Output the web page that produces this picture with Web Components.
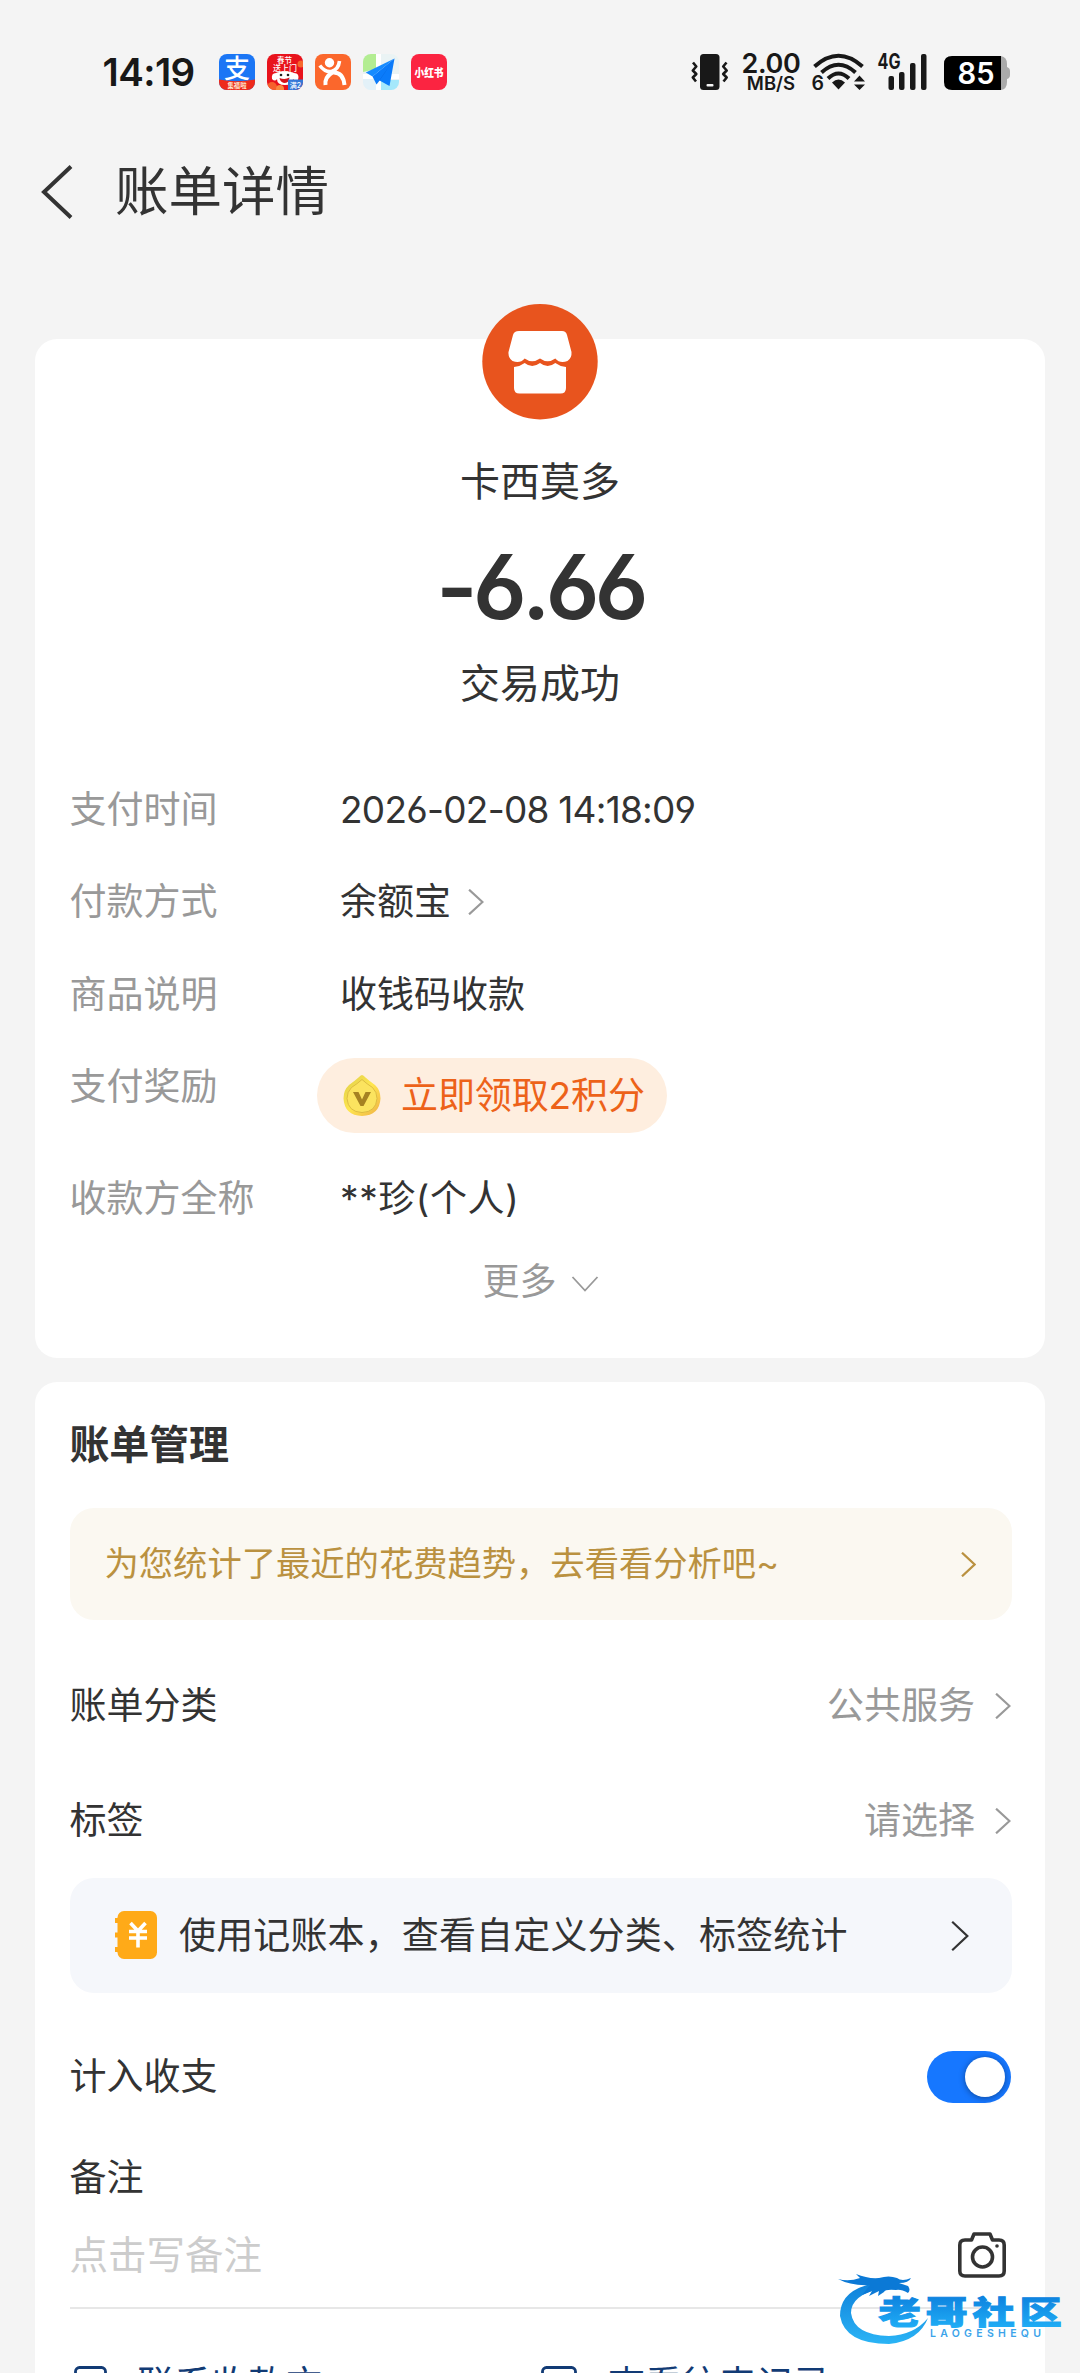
<!DOCTYPE html>
<html lang="zh-CN">
<head>
<meta charset="utf-8">
<title>账单详情</title>
<style>
html,body{margin:0;padding:0;background:#f4f4f4}
body{width:1080px;height:2373px;overflow:hidden;font-family:Inter,"Noto Sans CJK SC",sans-serif;font-size:37px;color:#333;-webkit-font-smoothing:antialiased}
</style>
</head>
<body>
<bill-page></bill-page>
<script>
const define = (name, html) => {
  const t = document.createElement('template');
  t.innerHTML = html;
  customElements.define(name, class extends HTMLElement {
    constructor() {
      super();
      this.attachShadow({ mode: 'open' }).append(t.content.cloneNode(true));
    }
  });
};

define('app-icons', `
<style>:host{display:flex;gap:12px}svg{width:36px;height:36px;display:block}</style>
<svg viewBox="0 0 36 36"><defs><clipPath id="a"><rect width="36" height="36" rx="8"/></clipPath></defs><g clip-path="url(#a)"><rect width="36" height="36" fill="#1b76f5"/><text x="18" y="24" font-size="26" font-weight="500" fill="#fff" text-anchor="middle">支</text><path d="M0 25.5Q18 29 36 25.5V36H0Z" fill="#ee2a1c"/><text x="18" y="34" font-size="6.3" font-weight="700" fill="#ffe9cf" text-anchor="middle">集福啦</text></g></svg>
<svg viewBox="0 0 36 36"><defs><clipPath id="b"><rect width="36" height="36" rx="8"/></clipPath></defs><g clip-path="url(#b)"><rect width="36" height="36" fill="#e8131c"/><circle cx="34" cy="10" r="3.5" fill="#f6672c"/><circle cx="5" cy="33" r="5" fill="#f6602c"/><circle cx="13" cy="35" r="4" fill="#f88a40"/><text x="17.500" y="8.800" font-size="7.500" font-weight="500" fill="#fff" text-anchor="middle">春节</text><text x="18" y="17" font-size="8" font-weight="500" fill="#fff" text-anchor="middle">送上门</text><path d="M5 25Q4 19 9 19Q12 17.500 18 17.500Q24 17.500 27 19Q33 19 31 26Q28 28 26 25Q26 31 18 31Q10 31 10 25Q8 28 5 25Z" fill="#fff"/><circle cx="14" cy="21" r="1.300" fill="#222"/><circle cx="21" cy="21" r="1.300" fill="#222"/><path d="M12.500 24Q18 26 22.500 23.500Q22 29 17 29Q13 28 12.500 24Z" fill="#d5121c"/><rect x="21" y="25.500" width="15" height="10.500" fill="#3478d8"/><text x="28.500" y="33.500" font-size="7" font-weight="500" fill="#fff" text-anchor="middle">满2</text></g></svg>
<svg viewBox="0 0 36 36"><rect width="36" height="36" rx="8" fill="#fb672c"/><circle cx="14.500" cy="8.700" r="4.700" fill="#fff"/><path d="M4.800 11.500Q10 18.500 16.500 17.500Q23.500 15.500 24.500 7" fill="none" stroke="#fff" stroke-width="3.600"/><path d="M10.500 31Q9.500 23 17.500 18.500Q28 17.500 29.500 31" fill="none" stroke="#fff" stroke-width="4"/></svg>
<svg viewBox="0 0 36 36"><defs><clipPath id="c"><rect width="36" height="36" rx="8"/></clipPath></defs><g clip-path="url(#c)"><rect width="36" height="36" fill="#eaf3f4"/><path d="M0 0H13V15L0 18Z" fill="#b3ed92"/><path d="M13 0H18V36H13ZM0 20H36V25H0Z" fill="#fff"/><path d="M18 26H36V36H18Z" fill="#a5e8fb"/><path d="M0 25H13V36H0Z" fill="#e3f1f8"/></g><path d="M31.500 4.500L2.800 18.500L9.500 22.500Z" fill="#168bff"/><path d="M31.500 4.500L9.500 22.500L13.500 30.500L16.500 26.500L26.500 32Z" fill="#0a7bfa"/><path d="M31.500 4.500L13.500 30.500L16.500 26.500Z" fill="#0558c6"/></svg>
<svg viewBox="0 0 36 36"><rect width="36" height="36" rx="8" fill="#fb2441"/><text x="18" y="22.500" font-size="11.500" font-weight="900" fill="#fff" text-anchor="middle" textLength="29" lengthAdjust="spacingAndGlyphs">小红书</text></svg>`);

define('system-tray', `
<style>
:host{display:flex;align-items:flex-start;height:38px;color:#181818}
svg{display:block;overflow:visible;flex:none}
.net{width:58px;margin:0 12px 0 14px;text-align:center;display:flex;flex-direction:column;align-items:center}
.a{font-size:27px;line-height:20px;font-weight:600;letter-spacing:-.3px}
.b{font-size:18.500px;line-height:15px;margin-top:2px;font-weight:600}
</style>
<svg width="37" height="36" viewBox="0 0 37 36"><rect x="9" y="0" width="19.500" height="36" rx="3.500" fill="#181818"/><rect x="15.500" y="30" width="7" height="2.500" rx="1" fill="#f4f4f4"/><g fill="none" stroke="#181818" stroke-width="2.600" stroke-linejoin="round"><path d="M2 8.500L5.300 12.500L1.800 16.500L5.300 20L1.800 23.500L5 27.500"/><path d="M35.500 8.500L32.200 12.500L35.700 16.500L32.200 20L35.700 23.500L32.500 27.500"/></g></svg>
<div class="net"><span class="a">2.00</span><span class="b">MB/S</span></div>
<svg width="54" height="38" viewBox="0 0 54 38"><g fill="none" stroke="#181818" stroke-width="4"><path d="M2.500 12.500Q26.500-9 50.500 12.500"/><path d="M9.500 18.500Q26.500 3 43.500 18.500"/><path d="M16 24.500Q26.500 14.500 37 24.500"/></g><path d="M20 28.500Q26.500 22.500 33 28.500L26.500 35.500Z" fill="#181818"/><text x="-.500" y="36" font-size="19.500" font-weight="600" fill="#181818">6</text><path d="M47.500 21.500L53 27.500H42ZM47.500 36L42 30.500H53Z" fill="#181818"/></svg>
<svg style="margin-left:12px" width="50" height="36" viewBox="0 0 50 36"><text x="-.500" y="15" font-size="21" font-weight="700" fill="#181818" textLength="23" lengthAdjust="spacingAndGlyphs">4G</text><g fill="#181818"><rect x="10.500" y="22" width="5.500" height="14" rx="2"/><rect x="21" y="18" width="5.500" height="18" rx="2"/><rect x="32" y="9" width="5.500" height="27" rx="2"/><rect x="43" y="0" width="5.500" height="36" rx="2"/></g></svg>
<svg style="margin:2px 0 0 16px" width="67" height="34" viewBox="0 0 67 34"><path d="M57 0Q63 1 63 8V11Q66 12 66 15V19Q66 22 63 23V26Q63 33 57 34Z" fill="#aaa"/><path d="M8 0H57V34H8Q0 34 0 26V8Q0 0 8 0Z" fill="#000"/><text x="32" y="28" font-size="30" font-weight="600" fill="#fff" text-anchor="middle" textLength="37" lengthAdjust="spacingAndGlyphs">85</text></svg>`);

define('status-bar', `
<style>
:host{display:flex;align-items:flex-start;box-sizing:border-box;height:144px;padding:54px 69px 0 102.500px;color:#181818}
.t{font-size:38.500px;line-height:36px;font-weight:600;width:116.500px;letter-spacing:-.6px}
system-tray{margin-left:auto}
</style><span class="t">14:19</span><app-icons></app-icons><system-tray></system-tray>`);

define('nav-bar', `
<style>
:host{display:flex;align-items:center;height:96px;padding-left:41px}
svg{display:block;width:32px;height:54px;margin-right:42px}
span{font-size:53.500px;line-height:96px}
</style><svg viewBox="0 0 32 54"><path d="M30 1.500L3 27L30 52.500" fill="none" stroke="#333" stroke-width="4"/></svg><span><slot></slot></span>`);

/* chevron: size and colour come from the host's width, height and colour */
define('chevron-right', `
<style>:host{display:block;width:16px;height:26px;flex:none;color:#999}svg{display:block;width:100%;height:100%}</style>
<svg viewBox="0 0 15 26" preserveAspectRatio="none"><path d="M1 .700L13.600 13L1 25.300" fill="none" stroke="currentColor" stroke-width="2.200" vector-effect="non-scaling-stroke"/></svg>`);

define('ui-card', `
<style>:host{display:block;box-sizing:border-box;width:1010px;margin-left:35px;background:#fff;border-radius:22px}</style><slot></slot>`);

define('payee-summary', `
<style>
:host{display:flex;flex-direction:column;align-items:center}
.badge{display:block;width:116px;height:116px;margin-top:-35px}
.n{font-size:40px;line-height:54px;margin-top:34.500px;height:54px}
.amt{font-size:89px;line-height:88px;height:88px;margin-top:34px;font-weight:600;font-feature-settings:"cv03","cv04","cv05","ss01";letter-spacing:-4.700px}
.s{font-size:40px;line-height:54px;margin-top:26.500px;height:54px}
</style>
<svg class="badge" viewBox="0 0 116 116"><circle cx="58" cy="57.700" r="57.700" fill="#e8541e"/><path d="M37 27H80Q84 27 85 31L89.500 48Q90 54 85.500 57Q78 60 73.300 54.500Q65.700 60 58 54.500Q50 60 42.700 54.500Q38 60 30.500 57Q26 54 26.500 48L31 31Q32 27 37 27Z" fill="#fff"/><path d="M32 63Q38 62.500 42.700 59Q50 65 58 59Q65.700 65 73.300 59Q78 62.500 84 63V84Q84 89.500 78.500 89.500H37.500Q32 89.500 32 84Z" fill="#fff"/></svg>
<span class="n"><slot name="name"></slot></span><span class="amt"><slot name="amount"></slot></span><span class="s"><slot name="state"></slot></span>`);

define('detail-row', `
<style>
:host{display:flex;align-items:center;height:92.500px;padding:0 34.500px;line-height:54px}
.l{width:270.500px;color:#999;flex:none}
.v{display:flex;align-items:center;color:#333}
</style><span class="l"><slot name="label"></slot></span><span class="v"><slot></slot></span>`);

define('reward-pill', `
<style>
:host{display:flex;align-items:center;box-sizing:border-box;width:350px;height:75px;margin:0 0 -20px -23px;border-radius:38px;background:#feeedf;color:#ed6219;padding-left:26px;line-height:72px;letter-spacing:-.1px}
svg{width:38px;height:42px;margin-right:20px;display:block}
</style>
<svg viewBox="0 0 38 42"><defs><linearGradient id="g" x2="1" y2="1"><stop stop-color="#dccd48"/><stop offset=".5" stop-color="#ffe650"/><stop offset="1" stop-color="#efb045"/></linearGradient></defs><path d="M19 0Q20.500 0 22.500 2.500Q27 6.500 32 10Q37.500 15 37.500 23.500Q36.500 40.500 19 41Q1.500 40.500 .500 23.500Q.500 15 6 10Q11 6.500 15.500 2.500Q17.500 0 19 0Z" fill="url(#g)"/><path d="M19 4.500Q24 9 29.500 12.500Q34 17 34 23.500Q33 37 19 37.500Q5 37 4 23.500Q4 17 8.500 12.500Q14 9 19 4.500Z" fill="#fbe35f" stroke="#d5b23c" stroke-width=".8"/><path d="M10 17H15.500L19 24.500L22.500 17H28L20.500 31H17.500Z" fill="#a68222"/></svg><slot></slot>`);

define('more-toggle', `
<style>:host{display:flex;justify-content:center;align-items:center;height:66px;color:#999;padding-left:1px}svg{width:28px;height:16px;margin:11px 0 0 14px;display:block}</style>
<slot></slot><svg viewBox="0 0 28 16"><path d="M1.500 1L14 14.500L26.500 1" fill="none" stroke="#999" stroke-width="1.800"/></svg>`);

define('tip-banner', `
<style>
:host{display:flex;align-items:center;box-sizing:border-box;width:942px;margin-left:34.500px;border-radius:24px}
.text{flex:1;white-space:nowrap;padding-bottom:6px}
</style><slot name="icon"></slot><span class="text"><slot></slot></span><slot name="end"></slot>`);

define('ledger-icon', `
<style>:host{display:block;width:42px;height:48px;margin:0 22.500px 1px 0;flex:none}svg{display:block}</style>
<svg width="42" height="48" viewBox="0 0 42 48"><rect x="2.500" y="0" width="39.500" height="48" rx="6.500" fill="#ffaa18"/><path d="M0 7H4V12H0ZM0 21.500H4V26.500H0ZM0 36H4V41H0Z" fill="#ffaa18"/><path d="M15.500 12L23 20L30.500 12M14 20.500H32M14 27H32M23 20V36.500" fill="none" stroke="#fff" stroke-width="3.600"/></svg>`);

define('setting-row', `
<style>
:host{display:flex;align-items:center;height:115px;padding:0 34px 0 34.500px;line-height:54px}
.v{margin-left:auto;display:flex;align-items:center;color:#999;gap:20px}
</style><span><slot name="label"></slot></span><span class="v"><slot></slot></span>`);

define('toggle-switch', `
<style>:host{display:flex;justify-content:flex-end;align-items:center;box-sizing:border-box;width:84px;height:52px;border-radius:26px;background:#1677ff;padding-right:6px}i{display:block;width:40px;height:40px;border-radius:50%;background:#fff;box-shadow:0 1px 6px rgba(0,0,0,.4)}</style><i></i>`);

define('note-field', `
<style>
:host{display:block;margin:26px 34.500px 0}
.h{height:50px;line-height:51px}
.f{display:flex;align-items:center;justify-content:space-between;height:70px;margin-top:18px;padding-right:5px;color:#ccc;font-size:38.500px;line-height:70px;border-bottom:2px solid #e7e7e7;padding-bottom:17px}
svg{display:block;width:48px;height:46px}
</style>
<div class="h"><slot name="label"></slot></div>
<div class="f"><span><slot></slot></span><svg viewBox="0 0 48 46"><g fill="none" stroke="#333" stroke-width="3.600" stroke-linejoin="round"><path d="M7 8H13.500L16 2H32L34.500 8H41Q46.200 8 46.200 13V39Q46.200 44 41 44H7Q1.800 44 1.800 39V13Q1.800 8 7 8Z"/><circle cx="24.500" cy="25" r="10"/></g><circle cx="39" cy="14" r="1.800" fill="#333"/></svg></div>`);

define('action-links', `
<style>
:host{display:flex;margin:26px 34.500px 0;height:100px;color:#123b75;line-height:100px}
.c{display:flex;align-items:center;width:470.500px}
svg{display:block;width:34px;height:38px;margin:0 30px 0 4px}
</style>
<div class="c"><svg viewBox="0 0 34 38"><rect x="1.500" y="1.500" width="30" height="34" rx="4" fill="none" stroke="#123b75" stroke-width="2.800"/></svg><slot name="a"></slot></div>
<div class="c"><svg style="margin-left:1px;width:37px" viewBox="0 0 37 38"><rect x="1.500" y="1.500" width="33" height="34" rx="4" fill="none" stroke="#123b75" stroke-width="2.800"/></svg><slot name="b"></slot></div>`);

/* translucent community stamp floating above the page corner */
define('site-stamp', `
<style>:host{position:absolute;left:836px;top:2270px;display:block}svg{display:block;overflow:visible}</style>
<svg width="228" height="78" viewBox="0 0 228 78"><defs><linearGradient id="w" x2="0" y2="1"><stop stop-color="#0c7fdd"/><stop offset="1" stop-color="#22b2f8"/></linearGradient><linearGradient id="r" gradientUnits="userSpaceOnUse" x1="0" y1="5" x2="0" y2="75"><stop stop-color="#0b79d6"/><stop offset="1" stop-color="#2bb5f6"/></linearGradient></defs>
<path d="M40 13Q4 19 4 46Q9 74 53 74Q83 71 92 48Q78 65 53 66Q18 65 15 43Q15 25 46 18Z" fill="url(#r)"/>
<path d="M2 9Q13 12 24 8L20 4Q32 9 43 8Q53 5 61 8Q66 12 75 8Q73 13 63 13L72 16Q75 20 72 23Q65 19 60 20Q49 19 48 22L42 26L43 21L33 26L36 21L26 25L34 15Q15 16 2 9Z" fill="#0b79d6"/>
<g transform="translate(42.500 54) scale(1.340 1)"><text font-size="31.500" font-weight="900" fill="url(#w)" stroke="url(#w)" stroke-width="1" letter-spacing="3.600">老哥社区</text></g>
<text x="94" y="67" font-size="10.500" font-weight="600" fill="#3ba3ea" textLength="111" lengthAdjust="spacing">LAOGESHEQU</text></svg>`);

define('bill-page', `
<style>
:host{display:block;width:1080px;height:2373px;overflow:hidden;position:relative;background:#f4f4f4}
.first{margin-top:99px;height:1019px}
.rows{padding-top:52.500px}
.date{letter-spacing:-.75px;font-feature-settings:"cv03","cv04"}
.payee{letter-spacing:.6px}
.reward{height:112px;align-items:flex-start;padding-top:0}
.reward>span{line-height:92px}
.reward reward-pill{margin-top:17px}
.second{margin-top:24px;padding-top:38px;height:1100px}
h2{margin:0 0 38px 34.500px;font-size:40px;line-height:50px;font-weight:700;letter-spacing:-.2px}
.gold{height:112px;background:#fbf8f1;color:#ba9140;font-size:34.300px;padding:0 35.500px 0 35px;margin-bottom:28px}
.gold chevron-right{color:#ba9140;width:15px;height:25px}
.blue{height:115px;background:#f5f7fb;padding:0 43px 0 45px;letter-spacing:.14px}
.blue chevron-right{color:#333;width:18px;height:30px}
.flow{height:100px;margin-top:33.500px;margin-bottom:-.5px}
</style>
<status-bar></status-bar>
<nav-bar>账单详情</nav-bar>
<ui-card class="first">
  <payee-summary><span slot="name">卡西莫多</span><span slot="amount">-6.66</span><span slot="state">交易成功</span></payee-summary>
  <div class="rows">
    <detail-row><span slot="label">支付时间</span><span class="date">2026-02-08 14:18:09</span></detail-row>
    <detail-row><span slot="label">付款方式</span>余额宝<chevron-right style="margin-left:17px"></chevron-right></detail-row>
    <detail-row><span slot="label">商品说明</span>收钱码收款</detail-row>
    <detail-row class="reward"><span slot="label">支付奖励</span><reward-pill>立即领取2积分</reward-pill></detail-row>
    <detail-row><span slot="label">收款方全称</span><span class="payee">**珍(个人)</span></detail-row>
  </div>
  <more-toggle>更多</more-toggle>
</ui-card>
<ui-card class="second">
  <h2>账单管理</h2>
  <tip-banner class="gold">为您统计了最近的花费趋势，去看看分析吧~<chevron-right slot="end"></chevron-right></tip-banner>
  <setting-row><span slot="label">账单分类</span>公共服务<chevron-right></chevron-right></setting-row>
  <setting-row><span slot="label">标签</span>请选择<chevron-right></chevron-right></setting-row>
  <tip-banner class="blue"><ledger-icon slot="icon"></ledger-icon>使用记账本，查看自定义分类、标签统计<chevron-right slot="end"></chevron-right></tip-banner>
  <setting-row class="flow"><span slot="label">计入收支</span><toggle-switch></toggle-switch></setting-row>
  <note-field><span slot="label">备注</span>点击写备注</note-field>
  <action-links><span slot="a">联系收款方</span><span slot="b">查看往来记录</span></action-links>
</ui-card>
<site-stamp></site-stamp>`);
</script>
</body>
</html>
